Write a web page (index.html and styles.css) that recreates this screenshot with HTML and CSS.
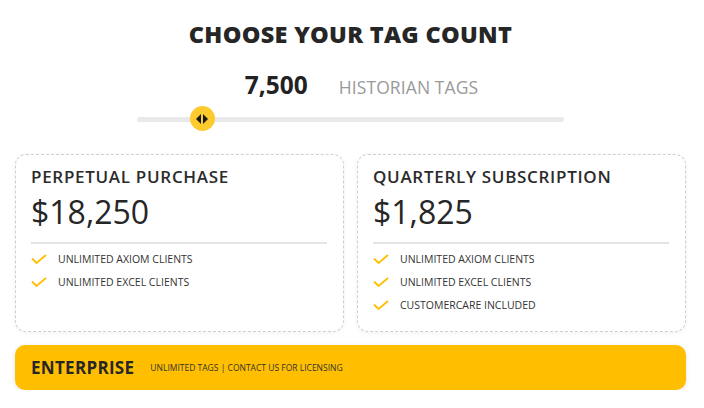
FILE: index.html
```html
<!DOCTYPE html>
<html>
<head>
<meta charset="utf-8">
<link rel="stylesheet" href="styles.css">
</head>
<body>
<div class="page">
  <h1 class="title">CHOOSE YOUR TAG COUNT</h1>
  <div class="count">
    <span class="count-num">7,500</span>
    <span class="count-label">HISTORIAN TAGS</span>
  </div>
  <div class="slider">
    <div class="track"></div>
    <div class="thumb" style="left: 15.2%">
      <svg width="14" height="12" viewBox="0 0 14 12"><polygon points="6,1 6,11 1,6" fill="#1a1a1a"/><polygon points="8,1 8,11 13,6" fill="#1a1a1a"/></svg>
    </div>
  </div>
  <div class="cards">
    <div class="card">
      <div class="card-title">PERPETUAL PURCHASE</div>
      <div class="price">$18,250</div>
      <ul class="features">
        <li><svg class="check" viewBox="0 0 16 10" width="16" height="10"><polyline points="1,4.5 5.5,9 15,1" fill="none" stroke="#ffbf00" stroke-width="1.8"/></svg>UNLIMITED AXIOM CLIENTS</li>
        <li><svg class="check" viewBox="0 0 16 10" width="16" height="10"><polyline points="1,4.5 5.5,9 15,1" fill="none" stroke="#ffbf00" stroke-width="1.8"/></svg>UNLIMITED EXCEL CLIENTS</li>
      </ul>
    </div>
    <div class="card">
      <div class="card-title">QUARTERLY SUBSCRIPTION</div>
      <div class="price">$1,825</div>
      <ul class="features">
        <li><svg class="check" viewBox="0 0 16 10" width="16" height="10"><polyline points="1,4.5 5.5,9 15,1" fill="none" stroke="#ffbf00" stroke-width="1.8"/></svg>UNLIMITED AXIOM CLIENTS</li>
        <li><svg class="check" viewBox="0 0 16 10" width="16" height="10"><polyline points="1,4.5 5.5,9 15,1" fill="none" stroke="#ffbf00" stroke-width="1.8"/></svg>UNLIMITED EXCEL CLIENTS</li>
        <li><svg class="check" viewBox="0 0 16 10" width="16" height="10"><polyline points="1,4.5 5.5,9 15,1" fill="none" stroke="#ffbf00" stroke-width="1.8"/></svg>CUSTOMERCARE INCLUDED</li>
      </ul>
    </div>
  </div>
  <div class="enterprise">
    <span class="ent-title">ENTERPRISE</span>
    <span class="ent-sub">UNLIMITED TAGS | CONTACT US FOR LICENSING</span>
  </div>
</div>
</body>
</html>
```

FILE: styles.css
```css
* { box-sizing: border-box; }
html, body { margin: 0; padding: 0; background: #fff; }
body { font-family: "Open Sans", "DejaVu Sans", sans-serif; color: #2b2b2b; }
.page { width: 704px; padding: 18px 18px 0 15px; }
.title {
  margin: 0;
  text-align: center;
  font-size: 23.5px;
  line-height: 32px;
  font-weight: 800;
  color: #262626;
  letter-spacing: 0.3px;
}
.count {
  display: flex;
  justify-content: center;
  align-items: baseline;
  gap: 31px;
  margin-top: 18px;
  height: 30px;
  padding-left: 22px;
}
.count-num { font-size: 24.5px; font-weight: 700; color: #222; }
.count-label { font-size: 17.5px; color: #9a9a9a; letter-spacing: 0.1px; }
.slider {
  position: relative;
  margin: 8px 0 0 122px;
  width: 427px;
  height: 26px;
  display: flex;
  align-items: center;
}
.track { width: 100%; height: 5px; border-radius: 3px; background: #e9e9e9; }
.thumb {
  position: absolute;
  top: 0;
  width: 25px;
  height: 25px;
  border-radius: 50%;
  background: #fecb2f;
  display: flex;
  align-items: center;
  justify-content: center;
  margin-left: -12px;
}
.cards {
  display: grid;
  grid-template-columns: 329px 329px;
  gap: 13px;
  margin-top: 22px;
}
.card {
  height: 178px;
  border: 1px dashed #cfcfcf;
  border-radius: 11px;
  padding: 11px 16px 0 15px;
  box-shadow: 0 1px 4px rgba(0,0,0,0.06);
}
.card-title { font-size: 17px; font-weight: 600; color: #2b2b2b; line-height: 22px; letter-spacing: 0.7px; }
.price { font-size: 32px; line-height: 40px; margin-top: 4px; color: #262626; padding-bottom: 10px; border-bottom: 2px solid #e4e4e4; }
.features { list-style: none; margin: 3px 0 0 0; padding: 0; }
.features li { display: flex; align-items: center; height: 23px; font-size: 10.5px; color: #333; letter-spacing: 0; }
.check { margin-right: 11px; flex: none; }
.enterprise {
  margin-top: 13px;
  height: 45px;
  background: #ffbf00;
  border-radius: 10px;
  display: flex;
  align-items: center;
  padding-left: 16px;
  box-shadow: 0 1px 4px rgba(0,0,0,0.12);
}
.ent-title { font-size: 17px; font-weight: 700; color: #262626; margin-right: 16px; letter-spacing: 0.3px; }
.ent-sub { font-size: 8.5px; color: #333; }
```
